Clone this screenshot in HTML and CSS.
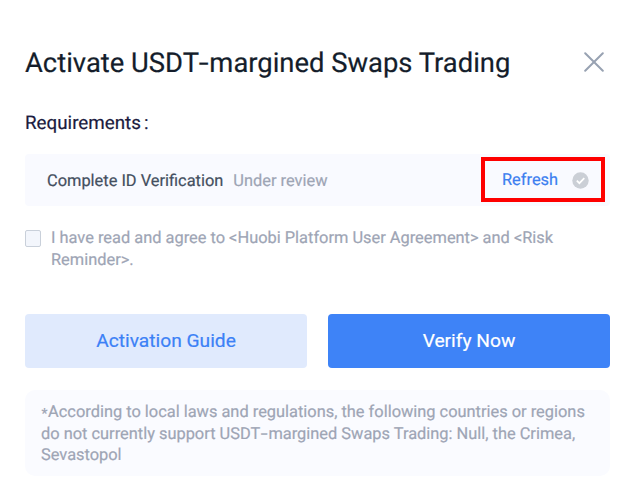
FILE: index.html
```html
<!DOCTYPE html>
<html lang="en">

<head>
    <meta charset="UTF-8">
    <meta name="viewport" content="width=device-width, initial-scale=1.0">
    <title>Activate USDT-margined Swaps Trading</title>
    <link rel="stylesheet" href="styles.css">
</head>

<body>

    <div class="dialog">
        <div class="header">
            <h1>Activate USDT<span class="hyphen">-</span>margined Swaps Trading</h1>
            <button class="close" aria-label="Close">
                <svg width="20" height="20" viewBox="0 0 20 20">
                    <path d="M1.2 1.2L18.8 18.8M18.8 1.2L1.2 18.8" />
                </svg>
            </button>
        </div>

        <h2>Requirements<span class="colon">:</span></h2>

        <div class="requirement">
            <span class="name">Complete ID Verification</span>
            <span class="status">Under review</span>
            <div class="highlight">
                <a class="refresh">Refresh</a>
                <svg class="check" width="17" height="17" viewBox="0 0 17 17">
                    <circle cx="8.5" cy="8.5" r="8.2" />
                    <path d="M4.8 8.6L7.4 11.2L12.3 6.2" />
                </svg>
            </div>
        </div>

        <label class="agreement">
            <input type="checkbox" class="agree-checkbox">
            <span>I have read and agree to &lt;Huobi Platform User Agreement&gt; and &lt;Risk<br>Reminder&gt;.</span>
        </label>

        <div class="actions">
            <button class="btn guide">Activation Guide</button>
            <button class="btn verify">Verify Now</button>
        </div>

        <p class="notice"><span class="asterisk">*</span>According to local laws and regulations, the following countries or regions<br>do not currently support USDT<span class="hyphen">-</span>margined Swaps Trading: Null, the Crimea,<br>Sevastopol</p>
    </div>

</body>

</html>
```
FILE: styles.css
```css
body {
    font-family: Roboto, 'Liberation Sans', sans-serif;
    background-color: white;
    color: #9ea5b5;
    margin: 0;
    font-size: 16.4px;
    text-rendering: geometricPrecision;
    -webkit-text-stroke: 0.2px;
}

.dialog {
    padding: 44px 8px 0 25px;
}

.header {
    display: flex;
    align-items: center;
    justify-content: space-between;
    height: 36px;
    padding-right: 6px;
}

h1 {
    margin: 2px 0 0;
    font-size: 27.4px;
    font-weight: 400;
    white-space: nowrap;
    color: #141d2b;
}

.hyphen {
    display: inline-block;
    margin: 0 0.05em;
    transform: scaleX(1.3);
}

button {
    border: none;
    padding: 0;
    font-family: inherit;
    cursor: pointer;
}

.close {
    display: flex;
    background: none;
}

.close path {
    fill: none;
    stroke: #98a2b2;
    stroke-width: 2;
    stroke-linecap: round;
}

h2 {
    margin: 31px 0 0;
    font-size: 18.8px;
    font-weight: 400;
    line-height: 24px;
    color: #1c1c40;
}

.colon {
    margin-left: 3px;
}

.requirement {
    display: flex;
    align-items: center;
    height: 52px;
    margin-top: 19px;
    padding: 0 5px 0 22px;
    box-sizing: border-box;
    background-color: #f9faff;
    border-radius: 4px;
}

.name {
    padding-top: 2px;
    color: #444f60;
}

.status {
    padding-top: 2px;
    margin-left: 10px;
}

.highlight {
    display: flex;
    align-items: center;
    justify-content: space-between;
    width: 124px;
    height: 45px;
    margin: 0 0 1px auto;
    padding: 0 12px 0 17px;
    box-sizing: border-box;
    border: 4px solid #fe0000;
}

.refresh {
    padding-top: 2px;
    color: #3d7ff0;
}

.check {
    margin-top: 1px;
}

.check circle {
    fill: #cbcfd6;
}

.check path {
    fill: none;
    stroke: white;
    stroke-width: 1.7;
}

.agreement {
    display: flex;
    margin-top: 22px;
    line-height: 22px;
}

.agree-checkbox {
    appearance: none;
    flex: none;
    width: 16px;
    height: 17px;
    margin: 2px 10px 0 0;
    border: 1px solid #c9d0da;
    border-radius: 2px;
    background-color: #f3f6fc;
}

.actions {
    display: grid;
    grid-template-columns: 1fr 1fr;
    gap: 21px;
    margin-top: 42px;
}

.btn {
    height: 54px;
    padding-bottom: 1px;
    font-size: 19.2px;
    -webkit-text-stroke: 0.2px;
    border-radius: 4px;
}

.guide {
    background-color: #e0eafd;
    color: #3c81f6;
}

.verify {
    background-color: #3e83f7;
    color: white;
}

.notice {
    height: 86px;
    margin: 22px 0 0;
    padding: 12px 16px;
    box-sizing: border-box;
    line-height: 21.7px;
    white-space: nowrap;
    background-color: #fafbff;
    border-radius: 10px;
}

.notice .hyphen {
    margin: 0 0.11em;
    transform: scaleX(1.5);
}

.asterisk {
    display: inline-block;
    line-height: 1;
    transform: translateY(2px) scale(0.85);
}
```
